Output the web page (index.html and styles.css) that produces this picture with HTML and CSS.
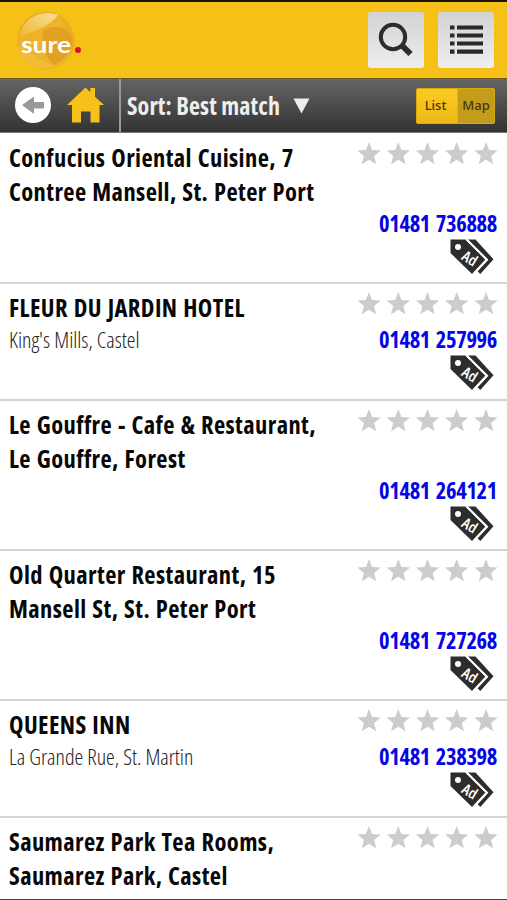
FILE: index.html
```html
<!DOCTYPE html>
<html lang="en">
<head>
<meta charset="utf-8">
<title>Sure directory</title>
<link rel="stylesheet" href="styles.css">
</head>
<body>
<svg class="defs" aria-hidden="true">
  <defs>
    <path id="star" d="M0-12 3.1-4 11.7-3.5 5.1 2 7.2 10.2 0 5.7-7.2 10.2-5.1 2-11.7-3.5-3.1-4Z"/>
    <symbol id="stars" viewBox="0 0 142 24">
      <use href="#star" x="12" y="12"/><use href="#star" x="41.3" y="12"/><use href="#star" x="70.5" y="12"/><use href="#star" x="99.7" y="12"/><use href="#star" x="129" y="12"/>
    </symbol>
    <symbol id="tag" viewBox="0 0 44 36">
      <path d="M17 .5h8.500l18 19.8L30.3 35l-3-3 10.7-11.5L18.5 2Z" fill="#2d2d2d"/>
      <path d="M.5.5h14.8l20.2 20L22 35 .5 14Z" fill="#2d2d2d"/>
      <path d="M16.500 .2 37 20.7 24.200 34.5" fill="none" stroke="#fff" stroke-width="2"/>
      <circle cx="8" cy="8" r="3" fill="#fff"/>
      <text x="10.500" y="20" transform="rotate(32 10.5 20)" fill="#fff" font-family="Open Sans" font-size="15" font-weight="600" textLength="15" lengthAdjust="spacingAndGlyphs">Ad</text>
    </symbol>
  </defs>
</svg>
<header class="top">
  <svg class="logo" width="74" height="64" viewBox="0 0 74 64">
    <defs><linearGradient id="ball" x1="0" y1="0" x2="1" y2="1"><stop offset="0" stop-color="#e9a719"/><stop offset=".45" stop-color="#efb52e"/><stop offset="1" stop-color="#eeb126"/></linearGradient>
    <linearGradient id="shine" x1="0" y1="1" x2="1" y2="0"><stop offset="0" stop-color="#edb62d"/><stop offset="1" stop-color="#fae09a"/></linearGradient></defs>
    <circle cx="31" cy="30.500" r="29" fill="url(#ball)"/>
    <path d="M4 27C8 8 25-1 43 5 35 16 20 21 4 27Z" fill="url(#shine)"/>
    <path d="M43 5C58 12 63 30 56 44L51 21Z" fill="#edad1f"/>
    <path d="M28 21C38 14 50 16 57 26 59 38 51 50 39 55 29 46 25 34 28 21Z" fill="#e2a122"/>
    <path d="M3 35C14 43 26 50 39 56 22 63 7 52 3 35Z" fill="#f2bc38"/>
    <text x="6" y="43" class="logo-text" textLength="50" lengthAdjust="spacingAndGlyphs">sure</text>
    <circle cx="63" cy="40" r="3" fill="#d7132b"/>
  </svg>
  <div class="actions">
    <button class="tile" aria-label="Search"><svg width="56" height="56" viewBox="0 0 56 56"><circle cx="25" cy="25" r="12.200" fill="none" stroke="#2c2c2c" stroke-width="4"/><path d="m33 32.500 9.500 9.500" stroke="#2c2c2c" stroke-width="6"/></svg></button>
    <button class="tile" aria-label="Menu"><svg width="56" height="56" viewBox="0 0 56 56"><path d="M12 15.500h4.500M12 23.500h4.500M12 31.500h4.500M12 39.700h4.500M19 15.500h26M19 23.500h26M19 31.500h26M19 39.700h26" stroke="#292929" stroke-width="4.200"/></svg></button>
  </div>
</header>
<nav class="bar">
  <div class="nav-icons">
    <svg width="36" height="36" viewBox="0 0 36 36"><circle cx="18" cy="18" r="18" fill="#fff"/><path d="M7 18 19 9.500v5.500h10v6.500H19v5.500Z" fill="#999"/></svg>
    <svg width="37" height="36" viewBox="0 0 37 36"><path d="M0 18 18.500.5l4.800 4.700V1H28v8.800L37 18h-4.500v17.500h-9V24.500H14v11H5V18Z" fill="#f6c21a"/></svg>
  </div>
  <div class="sort"><span>Sort: Best match</span><svg width="17" height="16" viewBox="0 0 16 16"><path d="M0 .5h16L8 15.500Z" fill="#eee"/></svg></div>
  <div class="toggle"><span class="on">List</span><span>Map</span></div>
</nav>
<main>
  <article class="row two"><div class="info"><h2>Confucius Oriental Cuisine, 7<br>Contree Mansell, St. Peter Port</h2></div><div class="side"><svg class="stars"><use href="#stars"/></svg><a>01481 736888</a><svg class="tag"><use href="#tag"/></svg></div></article>
  <article class="row"><div class="info"><h2>FLEUR DU JARDIN HOTEL</h2><p>King's Mills, Castel</p></div><div class="side"><svg class="stars"><use href="#stars"/></svg><a>01481 257996</a><svg class="tag"><use href="#tag"/></svg></div></article>
  <article class="row two"><div class="info"><h2>Le Gouffre - Cafe &amp; Restaurant,<br>Le Gouffre, Forest</h2></div><div class="side"><svg class="stars"><use href="#stars"/></svg><a>01481 264121</a><svg class="tag"><use href="#tag"/></svg></div></article>
  <article class="row two"><div class="info"><h2>Old Quarter Restaurant, 15<br>Mansell St, St. Peter Port</h2></div><div class="side"><svg class="stars"><use href="#stars"/></svg><a>01481 727268</a><svg class="tag"><use href="#tag"/></svg></div></article>
  <article class="row"><div class="info"><h2>QUEENS INN</h2><p>La Grande Rue, St. Martin</p></div><div class="side"><svg class="stars"><use href="#stars"/></svg><a>01481 238398</a><svg class="tag"><use href="#tag"/></svg></div></article>
  <article class="row last"><div class="info"><h2>Saumarez Park Tea Rooms,<br>Saumarez Park, Castel</h2></div><div class="side"><svg class="stars"><use href="#stars"/></svg></div></article>
</main>
</body>
</html>
```
FILE: styles.css
```css
* { box-sizing: border-box; }
body { margin: 0; height: 900px; overflow: hidden; background: #fff; border-bottom: 1px solid #444; font-family: "Open Sans", sans-serif; font-stretch: 75%; }
.defs { position: absolute; width: 0; height: 0; }
.top { height: 78px; border-top: 2px solid #17140c; background: #f6c116; display: flex; justify-content: space-between; padding: 8px 13px 0 15px; }
.logo-text { fill: #fff; font: 700 23px Lato, sans-serif; }
.actions { display: flex; gap: 14px; padding-top: 2px; }
.tile { width: 56px; height: 56px; padding: 0; border: 0; border-radius: 3px; background: linear-gradient(#d2d2d2, #eee); }
.tile svg { display: block; }
.bar { height: 55px; background: linear-gradient(#656565, #333); border-top: 1px solid #6e5a20; border-bottom: 1px solid #777; display: flex; align-items: center; }
.nav-icons { width: 121px; height: 53px; padding: 0 0 2px 15px; display: flex; align-items: center; gap: 16px; border-right: 2px solid #999; }
.sort { display: flex; align-items: center; gap: 13px; padding-left: 6px; color: #eee; font-size: 24px; font-weight: 700; white-space: nowrap; letter-spacing: .1px; }
.toggle { display: flex; width: 79px; height: 36px; margin-left: auto; margin-right: 12px; border: 1px solid #d9a90f; border-radius: 2px; font: 500 13px/32px "Noto Sans", sans-serif; color: #44370c; background: #c49c1c; }
.toggle span { flex: 1; text-align: center; }
.toggle .on { flex: 0 0 41px; padding-right: 3px; background: linear-gradient(#fccb22, #eeb916); border-right: 1px solid #dfb22a; }
main { padding-top: 1px; }
.row { height: 117px; border-bottom: 2px solid #d4d4d4; display: flex; justify-content: space-between; padding: 7px 10px 0 9px; }
.row.two { height: 150px; }
.row.last { height: 82px; border-bottom: 0; }
h2 { margin: 0; font-size: 24.5px; line-height: 34px; font-weight: 700; color: #080808; white-space: nowrap; letter-spacing: .4px; word-spacing: 1px; }
p { margin: 0; font-size: 22px; line-height: 28px; font-weight: 300; color: #222; white-space: nowrap; }
.side { display: flex; flex-direction: column; align-items: flex-end; }
.stars { width: 142px; height: 24px; fill: #ccc; margin: 1px -1.5px 0 0; }
.side a { margin-top: 9px; font-size: 22.5px; line-height: 30px; font-weight: 700; color: #0505e8; white-space: nowrap; letter-spacing: -.35px; word-spacing: 2px; }
.two .side a { margin-top: 43px; }
.tag { width: 44px; height: 36px; margin: 0 3px 0 0; }
```
